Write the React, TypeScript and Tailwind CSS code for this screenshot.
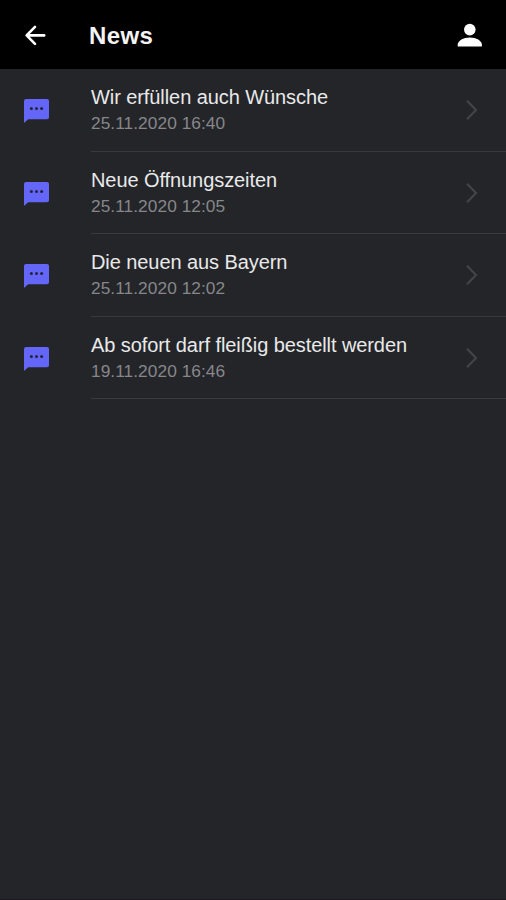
import React from 'react'

type NewsItem = {
  id: number
  title: string
  date: string
}

const news: NewsItem[] = [
  { id: 1, title: 'Wir erfüllen auch Wünsche', date: '25.11.2020 16:40' },
  { id: 2, title: 'Neue Öffnungszeiten', date: '25.11.2020 12:05' },
  { id: 3, title: 'Die neuen aus Bayern', date: '25.11.2020 12:02' },
  { id: 4, title: 'Ab sofort darf fleißig bestellt werden', date: '19.11.2020 16:46' },
]

const BackIcon: React.FC = () => (
  <svg width="22" height="22" viewBox="0 0 22 22" fill="none" stroke="currentColor" strokeWidth="2.6" strokeLinecap="round" strokeLinejoin="round">
    <path d="M11 1.9 2.6 10.4l8.4 8.5M2.9 10.4H20.2" />
  </svg>
)

const PersonIcon: React.FC = () => (
  <svg width="26" height="26" viewBox="0 0 26 26" fill="currentColor">
    <circle cx="12.8" cy="6.6" r="5.8" />
    <path d="M.7 23.6v-1.8c0-4.2 5.7-7.4 12.1-7.4s12.1 3.2 12.1 7.4v1.8z" />
  </svg>
)

const ChatIcon: React.FC = () => (
  <svg width="25" height="24" viewBox="0 0 25 24">
    <path d="M2 0h21a2 2 0 0 1 2 2v16.2a2 2 0 0 1-2 2H4.2L0 24V2a2 2 0 0 1 2-2z" fill="#6366f6" />
    <g fill="#24253c">
      <circle cx="7.4" cy="9.6" r="1.5" />
      <circle cx="12.5" cy="9.6" r="1.5" />
      <circle cx="17.6" cy="9.6" r="1.5" />
    </g>
  </svg>
)

const ChevronIcon: React.FC = () => (
  <svg width="14" height="22" viewBox="0 0 14 22" fill="none" stroke="currentColor" strokeWidth="2.2">
    <path d="M2 1.7 11 11 2 20.3" />
  </svg>
)

const NewsRow: React.FC<{ item: NewsItem }> = ({ item }) => (
  <li className="flex h-[82.5px] cursor-pointer">
    <div className="w-[91px] shrink-0 pl-6 pt-[30px]">
      <ChatIcon />
    </div>
    <div className="flex flex-1 justify-between border-b border-[#393a3d] pr-[27px]">
      <div className="pt-[15px]">
        <h2 className="whitespace-nowrap text-[20px] leading-[27px] tracking-[-0.08px] text-[#e9e9ea]">{item.title}</h2>
        <p className="text-[17.3px] leading-[25px] tracking-[0.06px] text-[#86878a]">{item.date}</p>
      </div>
      <div className="pt-[30px] text-[#434447]">
        <ChevronIcon />
      </div>
    </div>
  </li>
)

const App: React.FC = () => {
  return (
    <div className="flex h-screen flex-col overflow-hidden border-b border-[#211722] bg-[#242529] font-['Liberation_Sans',Arial,sans-serif]">
      <header className="flex h-[69px] shrink-0 items-center bg-black pl-6 pr-[23px] pt-0.5 text-white">
        <button type="button" aria-label="Zurück" className="w-[65px]">
          <BackIcon />
        </button>
        <h1 className="flex-1 text-[24px] font-bold leading-8 tracking-[0.4px] text-[#f4f4f4]">News</h1>
        <button type="button" aria-label="Profil">
          <PersonIcon />
        </button>
      </header>
      <ul>
        {news.map(item => (
          <NewsRow key={item.id} item={item} />
        ))}
      </ul>
    </div>
  )
}

export default App
